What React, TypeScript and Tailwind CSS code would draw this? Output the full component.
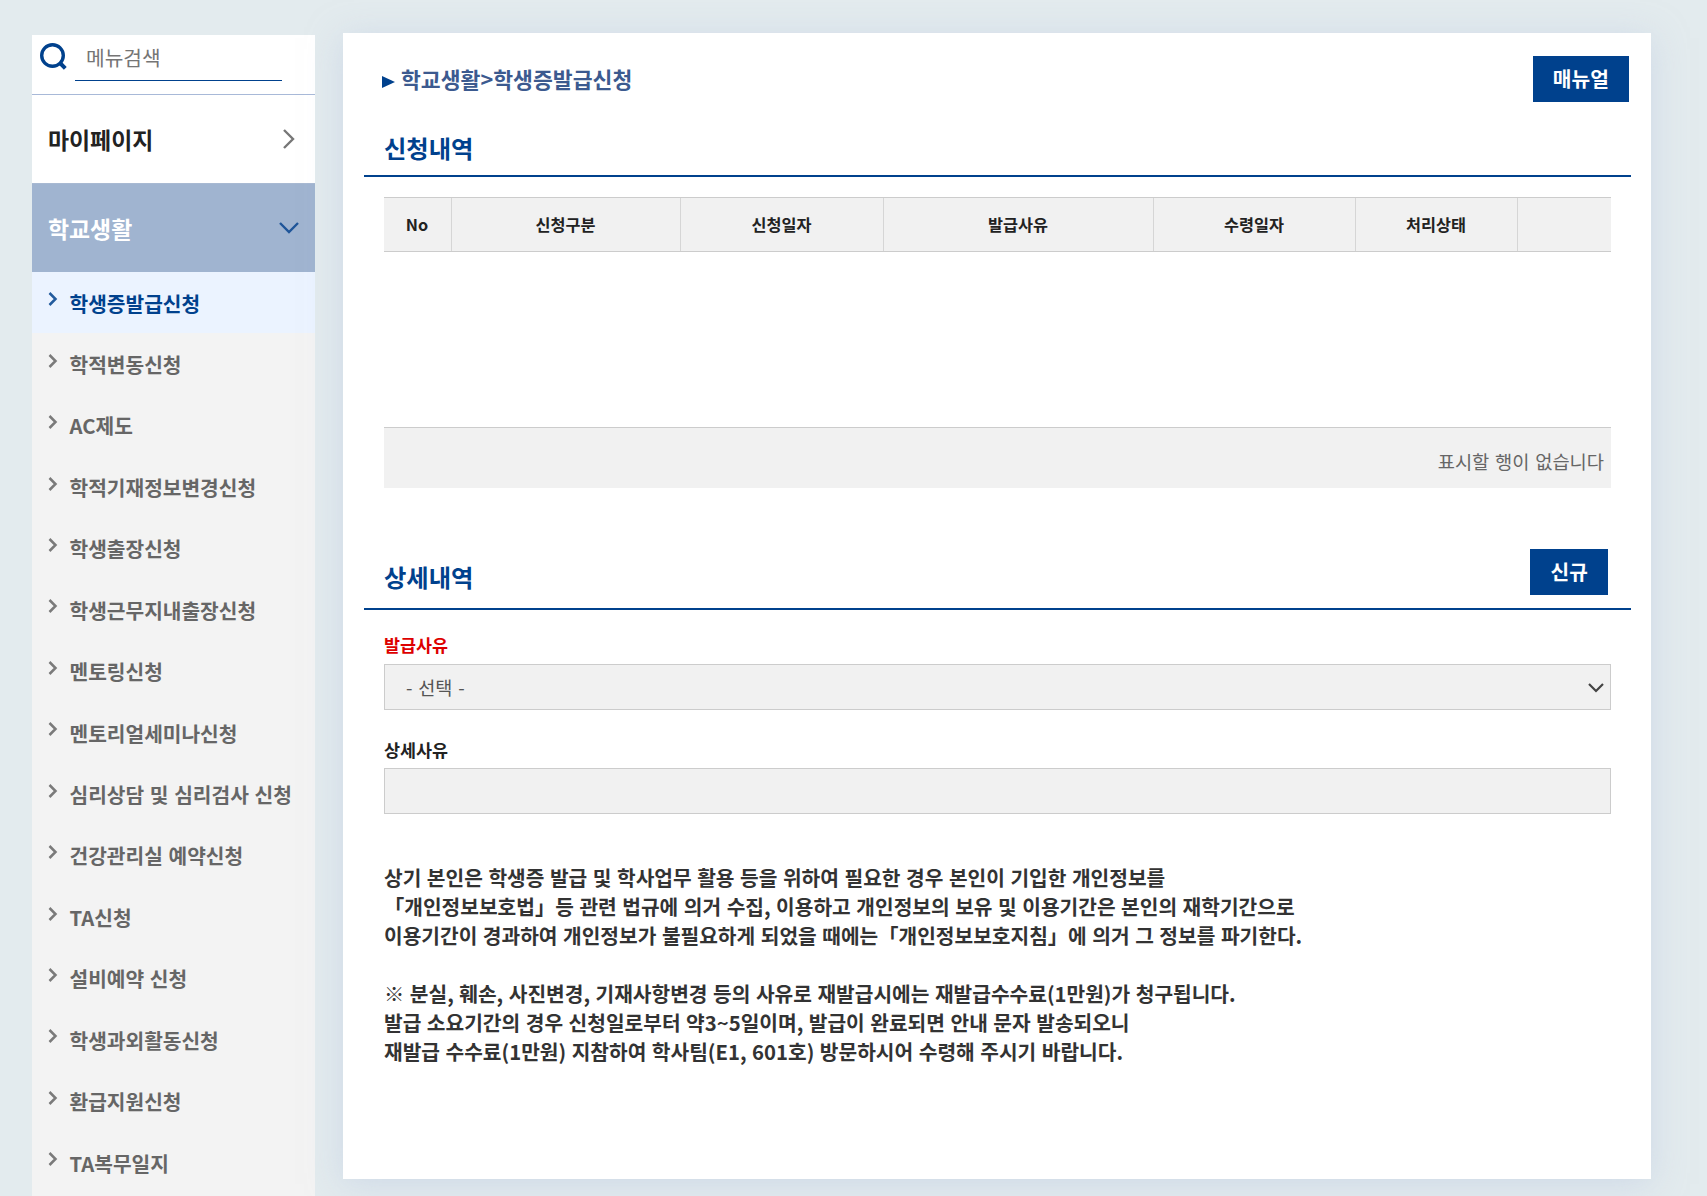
const MENU = [
  "학생증발급신청",
  "학적변동신청",
  "AC제도",
  "학적기재정보변경신청",
  "학생출장신청",
  "학생근무지내출장신청",
  "멘토링신청",
  "멘토리얼세미나신청",
  "심리상담 및 심리검사 신청",
  "건강관리실 예약신청",
  "TA신청",
  "설비예약 신청",
  "학생과외활동신청",
  "환급지원신청",
  "TA복무일지",
];

const COLUMNS = ["No", "신청구분", "신청일자", "발급사유", "수령일자", "처리상태", ""];

function Sidebar() {
  return (
    <aside className="mt-[35px] w-[283px] shrink-0 bg-[#f3f3f3]">
      <div className="flex h-[60px] items-start border-b border-[#a8b9d8] bg-white pl-2 pt-2">
        <svg width="28" height="28" viewBox="0 0 28 28" fill="none" stroke="#00418d">
          <circle cx="12.5" cy="12.5" r="10.8" strokeWidth="3.4" />
          <path d="M19.5 19.5l5.8 5.8" strokeWidth="4" />
        </svg>
        <input
          placeholder="메뉴검색"
          className="ml-[7px] -mt-2 h-[46px] w-[207px] border-b border-[#00418d] pb-0.5 pl-[11px] text-[20.3px] outline-none placeholder:text-[#757575]"
        />
      </div>
      <div className="flex h-[88px] items-center justify-between bg-white pl-4 pr-5 text-[22.9px] font-bold text-[#222]">
        마이페이지
        <svg width="12" height="20" viewBox="0 0 12 20" fill="none" stroke="#777" strokeWidth="2.4">
          <path d="M1 1l9 9-9 9" />
        </svg>
      </div>
      <div className="flex h-[89px] items-center justify-between border-t border-[#a8b9d2] bg-[#a0b4d0] pl-4 pr-4 text-[22.9px] font-bold text-white">
        학교생활
        <svg width="20" height="12" viewBox="0 0 20 12" fill="none" stroke="#1f5599" strokeWidth="2.4">
          <path d="M1 1l9 9 9-9" />
        </svg>
      </div>
      <ul>
        {MENU.map((name, i) => (
          <li
            key={name}
            className={`flex h-[61.45px] items-center pl-4 text-[20.3px] font-bold [word-spacing:1.1px] ${
              i === 0 ? "bg-[#ebf3ff] text-[#00418d]" : "text-[#666]"
            }`}
          >
            <svg
              width="10"
              height="14"
              viewBox="0 0 10 14"
              fill="none"
              stroke="currentColor"
              strokeWidth="2.5"
              className="mb-[7px] mr-[11.5px] opacity-85"
            >
              <path d="M1.5 1l6 6-6 6" />
            </svg>
            {name}
          </li>
        ))}
      </ul>
    </aside>
  );
}

function Button({ label }: { label: string }) {
  return (
    <button className="h-[46px] bg-[#00418d] px-[20.2px] pb-0.5 text-[20.3px] font-bold leading-none text-white">
      {label}
    </button>
  );
}

function History() {
  return (
    <section>
      <h2 className="ml-[21px] mr-5 flex h-[61px] items-center border-b-2 border-[#00418d] pl-5 pt-1.5 text-[24.3px] font-bold text-[#00418d]">
        신청내역
      </h2>
      <div className="ml-[41px] mr-10 mt-5">
        <div className="grid h-[55px] grid-cols-[68px_229px_203px_270px_202px_162px_1fr] border-y border-[#ccc] bg-[#f1f1f1] text-[16.3px] font-bold text-[#222]">
          {COLUMNS.map((col) => (
            <div
              key={col}
              className="flex items-center justify-center border-r border-[#d6d6d6] pr-px last:border-r-0"
            >
              {col}
            </div>
          ))}
        </div>
        <div className="h-[175px]" />
        <div className="flex h-[61px] items-center justify-end border-t border-[#ccc] bg-[#f1f1f1] pr-[7px] pt-1.5 text-[18.7px] text-[#666] [word-spacing:1.6px]">
          표시할 행이 없습니다
        </div>
      </div>
    </section>
  );
}

function Detail() {
  return (
    <section className="mt-[61px]">
      <div className="ml-[21px] mr-5 flex h-[61px] items-start justify-between border-b-2 border-[#00418d] pl-5 pr-[23px]">
        <h2 className="pt-2.5 text-[24.3px] font-bold leading-9 text-[#00418d]">상세내역</h2>
        <Button label="신규" />
      </div>
      <div className="ml-[41px] mr-10 text-[17.4px] font-bold leading-6">
        <div className="mt-[23px] text-[#dd0000]">발급사유</div>
        <div className="mt-[7px] flex h-[46px] items-center justify-between border border-[#ccc] bg-[#f1f1f1] pl-[21px] pr-[6px] text-[18.6px] font-normal text-[#555] [word-spacing:1.6px]">
          - 선택 -
          <svg width="16" height="10" viewBox="0 0 16 10" fill="none" stroke="#444" strokeWidth="2.2" className="mt-px">
            <path d="M1 1l7 7 7-7" />
          </svg>
        </div>
        <div className="mt-[28px] text-[#222]">상세사유</div>
        <div className="mt-[6px] h-[46px] border border-[#ccc] bg-[#f1f1f1]" />
      </div>
      <p className="mx-[41px] mt-[49px] whitespace-pre text-[20.3px] font-bold leading-[29px] text-[#333] [word-spacing:0.95px]">
        상기 본인은 학생증 발급 및 학사업무 활용 등을 위하여 필요한 경우 본인이 기입한 개인정보를
        <br />
        「개인정보보호법」등 관련 법규에 의거 수집, 이용하고 개인정보의 보유 및 이용기간은 본인의 재학기간으로
        <br />
        이용기간이 경과하여 개인정보가 불필요하게 되었을 때에는「개인정보보호지침」에 의거 그 정보를 파기한다.
        <br />
        <br />
        ※ 분실, 훼손, 사진변경, 기재사항변경 등의 사유로 재발급시에는 재발급수수료(1만원)가 청구됩니다.
        <br />
        발급 소요기간의 경우 신청일로부터 약3~5일이며, 발급이 완료되면 안내 문자 발송되오니
        <br />
        재발급 수수료(1만원) 지참하여 학사팀(E1, 601호) 방문하시어 수령해 주시기 바랍니다.
      </p>
    </section>
  );
}

function App() {
  return (
    <div className="flex h-[1196px] w-[1707px] overflow-hidden bg-[#e3ebee] pl-8 font-['Noto_Sans_CJK_KR',sans-serif]">
      <Sidebar />
      <main className="ml-7 mt-[33px] h-[1146px] w-[1308px] shrink-0 bg-white shadow-[0_5px_32px_rgba(185,200,225,0.5)]">
        <div className="flex items-start justify-between pl-[39px] pr-[22px] pt-[23px]">
          <div className="flex h-[60px] items-start pt-[8px] text-[21.6px] font-bold leading-[30px] text-[#3c5a8f]">
            <svg width="13" height="12" viewBox="0 0 13 12" className="mr-[6px] mt-3">
              <path d="M0 0l13 6-13 6z" fill="#00418d" />
            </svg>
            학교생활&gt;학생증발급신청
          </div>
          <Button label="매뉴얼" />
        </div>
        <History />
        <Detail />
      </main>
    </div>
  );
}

export default App;
